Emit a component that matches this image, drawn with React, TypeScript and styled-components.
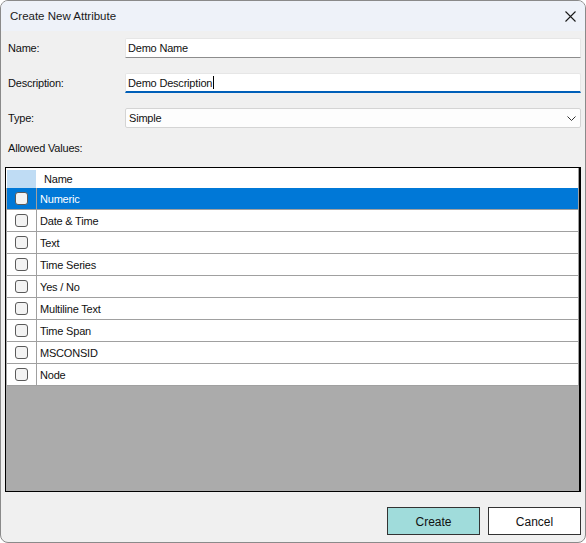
import React from "react";
import styled, { createGlobalStyle } from "styled-components";

const GlobalStyle = createGlobalStyle`
  html, body {
    margin: 0;
    padding: 0;
    background: #ffffff;
  }
  body {
    font-family: "Liberation Sans", Arial, sans-serif;
  }
  * { box-sizing: border-box; }
`;

const Window = styled.div`
  width: 586px;
  height: 543px;
  border: 1px solid #8a8a8a;
  border-radius: 8px;
  overflow: hidden;
  background: #f0f0f0;
  display: flex;
  flex-direction: column;
`;

const TitleBar = styled.div`
  height: 30px;
  flex: none;
  background: #eef2f9;
  display: flex;
  align-items: center;
  justify-content: space-between;
  padding: 0 0 0 9px;
`;

const Title = styled.span`
  font-size: 11.5px;
  color: #1a1a1a;
`;

const CloseButton = styled.button`
  width: 24px;
  height: 24px;
  border: none;
  background: transparent;
  padding: 0;
  display: flex;
  align-items: center;
  justify-content: center;
  margin-right: 3px;
`;

const Body = styled.div`
  flex: 1;
  display: flex;
  flex-direction: column;
  padding: 7px 4px 0 4px;
`;

const FormRow = styled.div`
  display: grid;
  grid-template-columns: 120px 1fr;
  align-items: center;
  height: 20px;
  margin-bottom: 15px;
`;

const Label = styled.label`
  font-size: 11px;
  letter-spacing: -0.2px;
  color: #111;
  padding-left: 3px;
`;

const TextInput = styled.div<{ $focused?: boolean }>`
  height: 20px;
  background: #ffffff;
  border: 1px solid #e6e6e6;
  border-bottom: ${(p) => (p.$focused ? "2px solid #005fb8" : "1px solid #8d8d8d")};
  border-radius: 2px 2px 0 0;
  font-size: 11px;
  letter-spacing: -0.2px;
  color: #111;
  display: flex;
  align-items: center;
  padding: 0 0 0 2px;
`;

const Caret = styled.span`
  display: inline-block;
  width: 1px;
  height: 13px;
  background: #000;
  margin-left: 1px;
`;

const Select = styled.div`
  height: 20px;
  background: #fdfdfd;
  border: 1px solid #d4d4d4;
  border-radius: 2px;
  font-size: 11px;
  letter-spacing: -0.2px;
  color: #111;
  display: flex;
  align-items: center;
  justify-content: space-between;
  padding: 0 4px 0 3px;
`;

const SectionLabel = styled(Label)`
  display: block;
  margin-top: -1px;
  margin-bottom: 13px;
`;

const GridFrame = styled.div`
  height: 325px;
  border: 1px solid #000;
  border-right-width: 2px;
  background: #ababab;
  display: flex;
  flex-direction: column;
`;

const HeaderRow = styled.div`
  height: 20px;
  flex: none;
  background: #ffffff;
  display: flex;
  align-items: flex-end;
  padding-left: 1px;
  border-right: 1px solid #a0a0a0;
`;

const CornerCell = styled.div`
  width: 29px;
  height: 18px;
  background: #bfdcf4;
`;

const HeaderCell = styled.div`
  font-size: 11px;
  letter-spacing: -0.2px;
  color: #111;
  padding-left: 8px;
  height: 18px;
  display: flex;
  align-items: center;
`;

const Row = styled.div<{ $selected?: boolean }>`
  height: 22px;
  flex: none;
  display: flex;
  margin-left: 1px;
  background: ${(p) => (p.$selected ? "#0078d7" : "#ffffff")};
  color: ${(p) => (p.$selected ? "#ffffff" : "#111111")};
  border-bottom: 1px solid #a0a0a0;
  border-right: 1px solid #a0a0a0;
`;

const CheckCell = styled.div`
  width: 30px;
  flex: none;
  border-right: 1px solid #a0a0a0;
  display: flex;
  align-items: center;
  justify-content: center;
`;

const CheckBox = styled.span`
  width: 13px;
  height: 13px;
  border: 1px solid #5a5a5a;
  border-radius: 3px;
  background: #f3f3f3;
`;

const NameCell = styled.div`
  flex: 1;
  font-size: 11px;
  letter-spacing: -0.2px;
  display: flex;
  align-items: center;
  padding-left: 3px;
`;

const Filler = styled.div`
  flex: 1;
`;

const Footer = styled.div`
  display: flex;
  justify-content: flex-end;
  gap: 8px;
  padding-top: 15px;
`;

const Button = styled.button<{ $primary?: boolean }>`
  width: 93px;
  height: 28px;
  border: 1px solid #333333;
  background: ${(p) => (p.$primary ? "#a0dcdb" : "#ffffff")};
  font-family: "Liberation Sans", Arial, sans-serif;
  font-size: 12px;
  color: #111;
  padding: 1px 0 0 0;
`;

const values = [
  "Numeric",
  "Date & Time",
  "Text",
  "Time Series",
  "Yes / No",
  "Multiline Text",
  "Time Span",
  "MSCONSID",
  "Node",
];

export default function App() {
  return (
    <>
      <GlobalStyle />
      <Window>
        <TitleBar>
          <Title>Create New Attribute</Title>
          <CloseButton aria-label="Close">
            <svg width="11" height="11" viewBox="0 0 11 11">
              <path d="M0.5 0.5 L10.5 10.5 M10.5 0.5 L0.5 10.5" stroke="#1a1a1a" strokeWidth="1.1" fill="none" />
            </svg>
          </CloseButton>
        </TitleBar>
        <Body>
          <FormRow>
            <Label>Name:</Label>
            <TextInput>Demo Name</TextInput>
          </FormRow>
          <FormRow>
            <Label>Description:</Label>
            <TextInput $focused>
              Demo Description
              <Caret />
            </TextInput>
          </FormRow>
          <FormRow>
            <Label>Type:</Label>
            <Select>
              Simple
              <svg width="9" height="5" viewBox="0 0 9 5">
                <path d="M0.5 0.5 L4.5 4.5 L8.5 0.5" stroke="#333" strokeWidth="1" fill="none" />
              </svg>
            </Select>
          </FormRow>
          <SectionLabel>Allowed Values:</SectionLabel>
          <GridFrame>
            <HeaderRow>
              <CornerCell />
              <HeaderCell>Name</HeaderCell>
            </HeaderRow>
            {values.map((v, i) => (
              <Row key={v} $selected={i === 0}>
                <CheckCell>
                  <CheckBox />
                </CheckCell>
                <NameCell>{v}</NameCell>
              </Row>
            ))}
            <Filler />
          </GridFrame>
          <Footer>
            <Button $primary>Create</Button>
            <Button>Cancel</Button>
          </Footer>
        </Body>
      </Window>
    </>
  );
}
